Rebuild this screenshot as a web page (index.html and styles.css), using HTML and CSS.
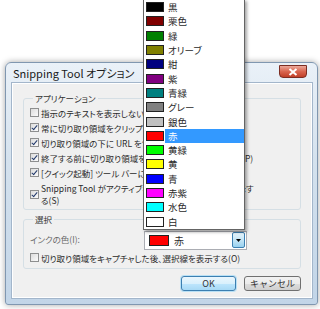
FILE: index.html
```html
<!DOCTYPE html>
<html lang="ja">
<head>
    <meta charset="UTF-8">
    <title>Snipping Tool オプション</title>
    <link rel="stylesheet" href="styles.css">
</head>
<body>
    <div class="desktop">
        <div class="window">
            <div class="titlebar">
                <span class="title">Snipping Tool オプション</span>
                <span class="close">
                    <svg width="10" height="8" viewBox="0 0 10 8"><path d="M1.5 1 L8.5 7 M8.5 1 L1.5 7" stroke="#fff" stroke-width="2"/></svg>
                </span>
            </div>
            <div class="client">
                <fieldset class="group">
                    <legend>アプリケーション</legend>
                    <div class="row"><span class="box"></span><span>指示のテキストを表示しない(H)</span></div>
                    <div class="row"><span class="box checked"></span><span>常に切り取り領域をクリップボードにコピーする(C)</span></div>
                    <div class="row"><span class="box checked"></span><span>切り取り領域の下に URL を含める (HTML のみ)(U)</span></div>
                    <div class="row"><span class="box checked"></span><span>終了する前に切り取り領域を保存するかどうか確認する(P)</span></div>
                    <div class="row"><span class="box checked"></span><span>[クイック起動] ツール バーにアイコンを表示</span></div>
                    <div class="row tall"><span class="box checked"></span><span>Snipping Tool がアクティブなときにオーバーレイを表示す<br>る(S)</span></div>
                </fieldset>
                <fieldset class="group">
                    <legend>選択</legend>
                    <div class="ink">
                        <span class="ink-label">インクの色(I):</span>
                        <div class="combo">
                            <span class="swatch" style="background:#ff0000"></span>
                            <span class="combo-text">赤</span>
                            <span class="combo-btn">
                                <svg width="5" height="3" viewBox="0 0 5 3"><path d="M0 0 H5 L2.5 3 Z" fill="#000"/></svg>
                            </span>
                        </div>
                    </div>
                    <div class="row"><span class="box"></span><span>切り取り領域をキャプチャした後、選択線を表示する(O)</span></div>
                </fieldset>
                <div class="buttons">
                    <button class="btn default">OK</button>
                    <button class="btn">キャンセル</button>
                </div>
            </div>
        </div>

        <ul class="droplist">
            <li><span class="swatch" style="background:#000000"></span><span class="name">黒</span></li>
            <li><span class="swatch" style="background:#800000"></span><span class="name">栗色</span></li>
            <li><span class="swatch" style="background:#008000"></span><span class="name">緑</span></li>
            <li><span class="swatch" style="background:#808000"></span><span class="name">オリーブ</span></li>
            <li><span class="swatch" style="background:#000080"></span><span class="name">紺</span></li>
            <li><span class="swatch" style="background:#800080"></span><span class="name">紫</span></li>
            <li><span class="swatch" style="background:#008080"></span><span class="name">青緑</span></li>
            <li><span class="swatch" style="background:#808080"></span><span class="name">グレー</span></li>
            <li><span class="swatch" style="background:#c0c0c0"></span><span class="name">銀色</span></li>
            <li class="selected"><span class="swatch" style="background:#ff0000"></span><span class="name">赤</span></li>
            <li><span class="swatch" style="background:#00ff00"></span><span class="name">黄緑</span></li>
            <li><span class="swatch" style="background:#ffff00"></span><span class="name">黄</span></li>
            <li><span class="swatch" style="background:#0000ff"></span><span class="name">青</span></li>
            <li><span class="swatch" style="background:#ff00ff"></span><span class="name">赤紫</span></li>
            <li><span class="swatch" style="background:#00ffff"></span><span class="name">水色</span></li>
            <li><span class="swatch" style="background:#ffffff"></span><span class="name">白</span></li>
        </ul>
    </div>
</body>
</html>
```

FILE: styles.css
```css
* {
    margin: 0;
    padding: 0;
    box-sizing: border-box;
}

body {
    background-color: #ffffff;
    font-family: "Noto Sans CJK JP", "Liberation Sans", sans-serif;
    font-feature-settings: "palt";
    color: #2a2a2a;
}

.desktop {
    position: relative;
    width: 320px;
    height: 309px;
    overflow: hidden;
}

/* dialog window */
.window {
    position: absolute;
    left: 5px;
    top: 62px;
    width: 313px;
    height: 243px;
    padding: 0 5px 6px 6px;
    display: flex;
    flex-direction: column;
    background: linear-gradient(#eaf1f8, #d5e2ee 40%, #c2d5e8);
    border: 1px solid #8097b0;
    border-radius: 6px 6px 3px 3px;
    box-shadow: 0 0 6px rgba(0, 0, 0, 0.35);
}

.titlebar {
    height: 20px;
    display: flex;
    align-items: flex-start;
}

.title {
    font-size: 11px;
    line-height: 21px;
    padding-left: 1px;
    color: #1a1a1a;
}

.close {
    margin-left: auto;
    margin-right: 5px;
    margin-top: 2px;
    width: 28px;
    height: 13px;
    display: flex;
    align-items: center;
    justify-content: center;
    background: linear-gradient(#eba89a, #d9654f 50%, #c03f28);
    border: 1px solid #7c2d22;
    border-radius: 0 0 4px 4px;
}

.client {
    flex: 1;
    background-color: #f0f0f0;
    border: 1px solid #ffffff;
    box-shadow: 0 0 0 1px #a3b6cb;
    padding: 8px 10px 0 10px;
    font-size: 8.5px;
}

.group {
    border: 1px solid #d5dfe5;
    border-radius: 3px;
    padding: 1px 6px 3px 6px;
}

.group + .group {
    margin-top: 3px;
}

legend {
    padding: 0 2px;
    margin-left: 3px;
    line-height: 12px;
    color: #333;
}

.row {
    display: flex;
    align-items: center;
    height: 15px;
    white-space: nowrap;
    gap: 2px;
}

.row.tall {
    height: 24px;
    margin-top: 2px;
    line-height: 12px;
}

.box {
    width: 9px;
    height: 9px;
    flex: none;
    border: 1px solid #8e8f8f;
    background: linear-gradient(135deg, #dcdcdc, #fbfbfb);
    position: relative;
}

.box.checked::after {
    content: "";
    position: absolute;
    left: 2px;
    top: 0;
    width: 2px;
    height: 5px;
    border: solid #21396b;
    border-width: 0 1.5px 1.5px 0;
    transform: rotate(40deg);
}

.ink {
    display: flex;
    align-items: center;
    margin-top: 4px;
    height: 20px;
}

.ink-label {
    width: 114px;
    color: #6a6a6a;
    margin-top: -3px;
}

.combo {
    width: 103px;
    height: 19px;
    display: flex;
    align-items: center;
    background: #ffffff;
    border: 1px solid #abadb3;
    padding-right: 1px;
}

.swatch {
    width: 20px;
    height: 11px;
    flex: none;
    border: 1px solid #222;
}

.combo .swatch {
    margin-left: 4px;
}

.combo-text {
    margin-left: 5px;
    font-size: 10px;
}

.combo-btn {
    margin-left: auto;
    width: 13px;
    height: 16px;
    display: flex;
    align-items: center;
    justify-content: center;
    background: linear-gradient(#e5f4fc, #c4e5f6 50%, #98d1ef);
    border: 1px solid #3c7fb1;
    border-radius: 2px;
}

.buttons {
    display: flex;
    justify-content: flex-end;
    gap: 8px;
    margin-top: 7px;
}

.btn {
    width: 57px;
    height: 15px;
    font-family: inherit;
    font-size: 9px;
    color: #333;
    background: linear-gradient(#f2f2f2, #ebebeb 50%, #dddddd 50%, #cfcfcf);
    border: 1px solid #707070;
    border-radius: 3px;
}

.btn.default {
    width: 55px;
    border-color: #3c7fb1;
    background: linear-gradient(#eaf6fd, #d9f0fc 50%, #bee6fd 50%, #a7d9f5);
    box-shadow: 0 0 0 1px #b9e0f5;
}

/* open color list */
.droplist {
    position: absolute;
    left: 143px;
    top: -1px;
    width: 102px;
    list-style: none;
    background: #ffffff;
    border: 1px solid #646464;
    box-shadow: 2px 2px 3px rgba(0, 0, 0, 0.35);
    font-size: 9.5px;
}

.droplist li {
    display: flex;
    align-items: center;
    height: 14.3px;
}

.droplist .swatch {
    width: 18px;
    height: 10px;
    margin-left: 2px;
    margin-right: 1px;
}

.droplist .name {
    flex: 1;
    align-self: stretch;
    display: flex;
    align-items: center;
    padding-left: 3px;
    color: #2a2a2a;
}

.droplist .selected .name {
    background-color: #3399ff;
    color: #ffffff;
}
```
